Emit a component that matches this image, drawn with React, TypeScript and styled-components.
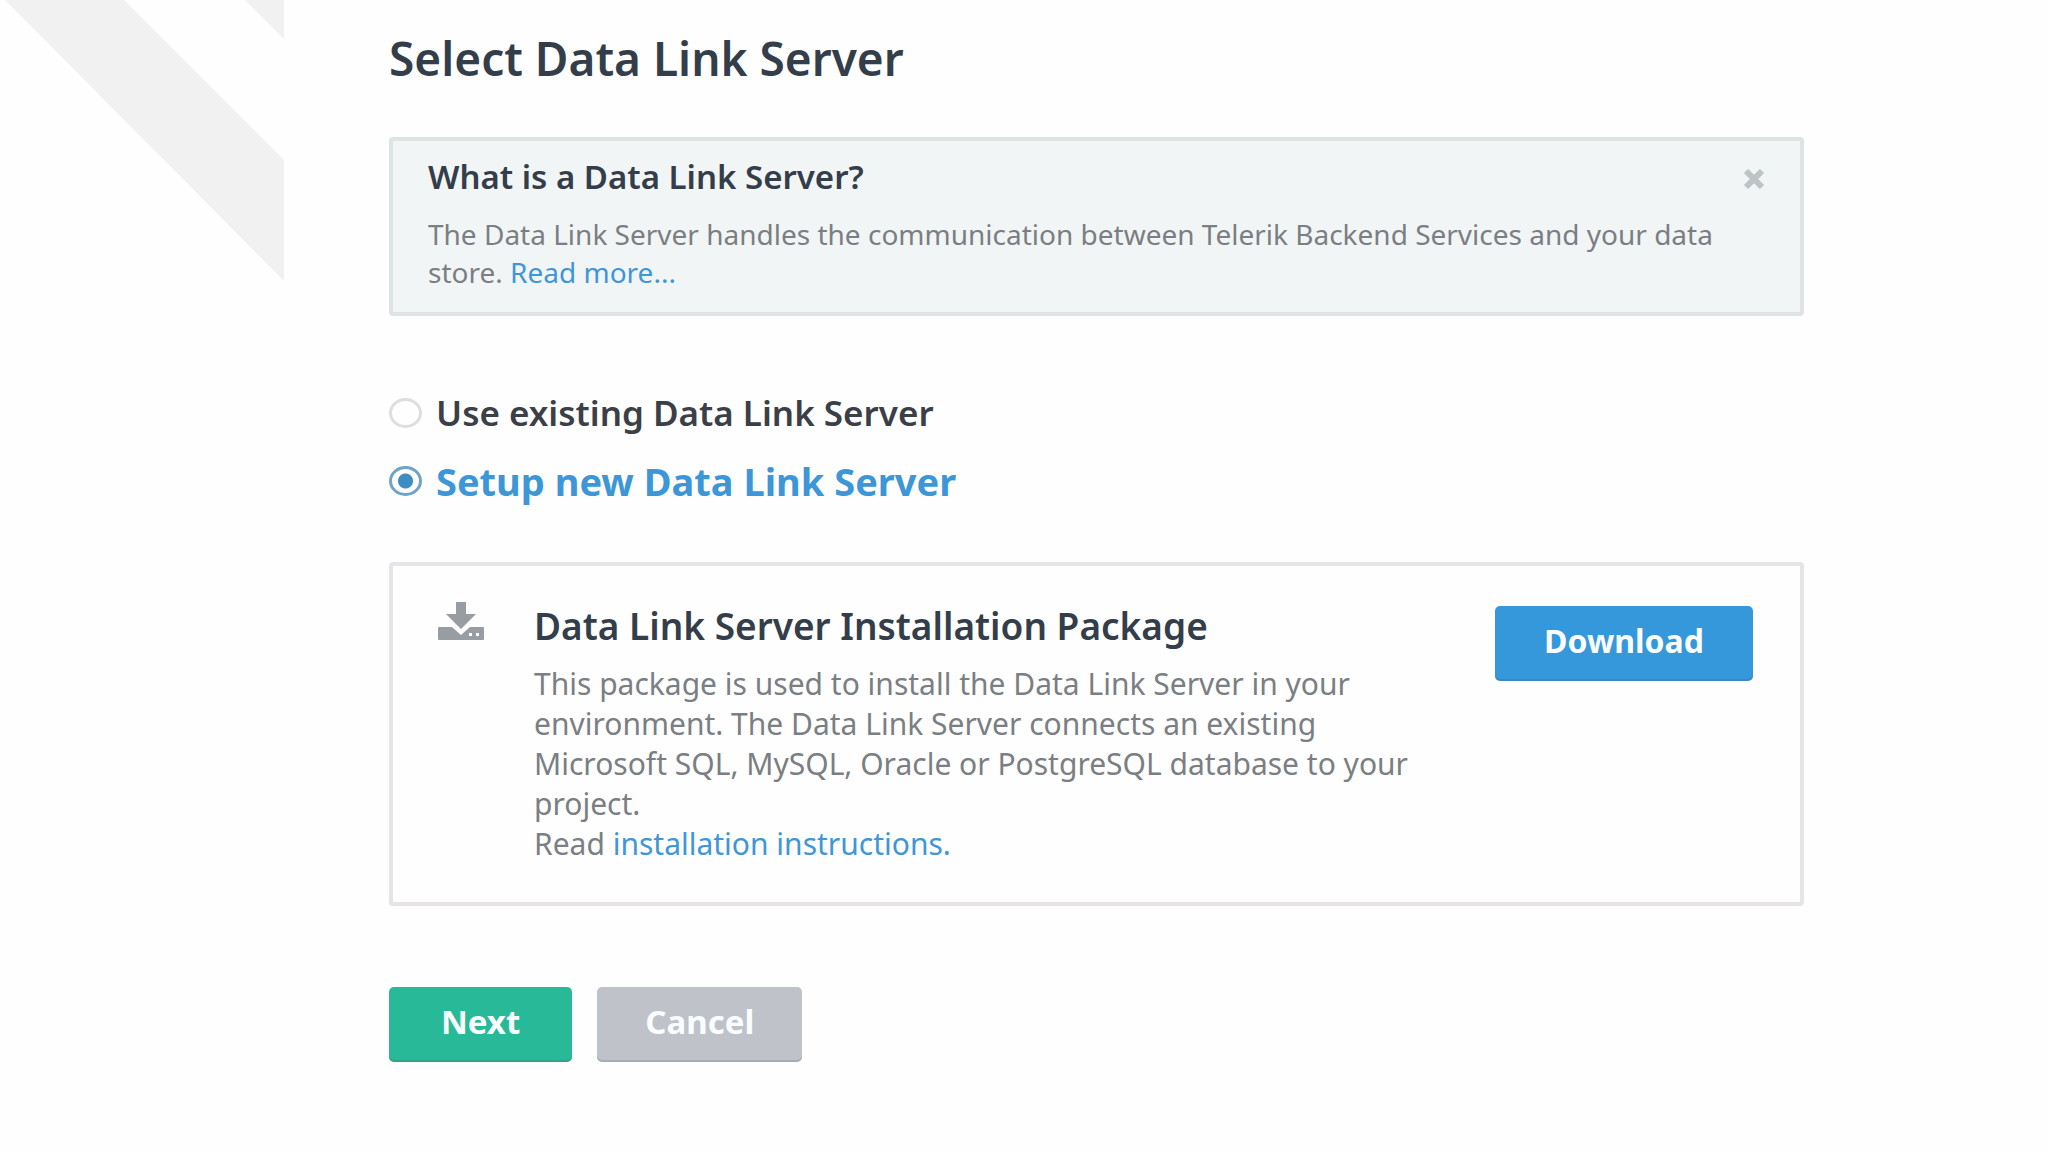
import React, { useState } from "react";
import styled, { createGlobalStyle } from "styled-components";

const GlobalStyle = createGlobalStyle`
  *, *::before, *::after { box-sizing: border-box; }
  body {
    margin: 0;
    background: #fefefe;
    color: #7b7e83;
    font-family: "Noto Sans", "Open Sans", sans-serif;
  }
  h1, h2, p { margin: 0; }
`;

const Page = styled.div`
  display: grid;
  grid-template-columns: 284px minmax(0, 1fr);
`;

const Stripes = styled.svg`
  display: block;
  width: 284px;
  height: 284px;
  fill: #f1f1f1;
`;

const Content = styled.main`
  padding: 26px 244px 88px 105px;
`;

const Title = styled.h1`
  font-size: 46px;
  line-height: 64px;
  font-weight: 600;
  color: #343e4a;
`;

const Panel = styled.section<{ $tinted?: boolean }>`
  border: 4px solid ${(p) => (p.$tinted ? "#e0e3e4" : "#e6e4e8")};
  border-radius: 4px;
  background: ${(p) => (p.$tinted ? "#f2f5f6" : "#fefefe")};
`;

const Info = styled(Panel)`
  display: flex;
  justify-content: space-between;
  align-items: flex-start;
  margin-top: 47px;
  padding: 14px 34px 21px 35px;
`;

const InfoTitle = styled.h2`
  font-size: 33px;
  line-height: 44px;
  font-weight: 600;
  color: #343e4a;
`;

const InfoText = styled.p`
  margin-top: 16px;
  font-size: 28px;
  line-height: 38px;
`;

const Link = styled.a`
  color: #4096d6;
  text-decoration: none;
`;

const CloseButton = styled.button`
  display: flex;
  flex: none;
  margin: 12px 0 0 0;
  padding: 2px 0;
  border: 0;
  background: none;
  cursor: pointer;
  svg { display: block; width: 24px; height: 20px; }
`;

const Choices = styled.fieldset`
  display: flex;
  flex-direction: column;
  gap: 24px;
  margin: 75px 0 0;
  padding: 0;
  border: 0;
`;

const Choice = styled.label<{ $active: boolean }>`
  display: flex;
  align-items: center;
  gap: 14px;
  align-self: flex-start;
  font-size: ${(p) => (p.$active ? 38 : 35)}px;
  line-height: 44px;
  font-weight: ${(p) => (p.$active ? 700 : 600)};
  color: ${(p) => (p.$active ? "#3d97d7" : "#3b3f47")};
  cursor: pointer;
`;

const Radio = styled.input`
  appearance: none;
  width: 33px;
  height: 30px;
  margin: 0;
  border: 3px solid #dedede;
  border-radius: 50%;
  background: #fefefe;
  &:checked {
    border-color: #6fa3c8;
    background: radial-gradient(circle, #3d8cc4 7px, #fefefe 8px);
  }
`;

const Package = styled(Panel)`
  display: flex;
  align-items: flex-start;
  margin-top: 59px;
  padding: 36px 47px 38px 45px;
`;

const TrayIcon = styled.svg`
  flex: none;
  width: 46px;
  height: 38px;
  margin: 0 50px 0 0;
  fill: #989ca3;
`;

const PackageBody = styled.div`
  flex: 1 1 0;
  min-width: 0;
  padding-right: 46px;
`;

const PackageTitle = styled.h2`
  font-size: 37px;
  line-height: 48px;
  font-weight: 600;
  color: #343e4a;
`;

const PackageText = styled.div`
  margin-top: 14px;
  font-size: 30px;
  line-height: 40px;
`;

const Button = styled.button<{ $tone: "blue" | "green" | "gray" }>`
  flex: none;
  height: 75px;
  padding: 0 ${(p) => ({ blue: 49, green: 52, gray: 48 })[p.$tone]}px 6px;
  border: 0;
  border-radius: 5px;
  font: inherit;
  font-size: 33px;
  line-height: 40px;
  font-weight: 700;
  color: #fafdff;
  background: ${(p) => ({ blue: "#3498db", green: "#28ba98", gray: "#c0c2ca" })[p.$tone]};
  box-shadow: inset 0 -2px 0 rgba(70, 80, 100, 0.2);
  cursor: pointer;
`;

const DownloadButton = styled(Button)`
  margin-top: 4px;
  font-size: 32px;
`;

const Actions = styled.footer`
  display: flex;
  gap: 25px;
  margin-top: 81px;
`;

export default function App() {
  const [mode, setMode] = useState("new");
  const [infoOpen, setInfoOpen] = useState(true);

  return (
    <>
      <GlobalStyle />
      <Page>
        <Stripes viewBox="0 0 284 284" aria-hidden="true">
          <path d="M5 0H124L284 160V281Z" />
          <path d="M245 0H284V39Z" />
        </Stripes>
        <Content>
          <Title>Select Data Link Server</Title>
          {infoOpen && (
            <Info $tinted>
              <div>
                <InfoTitle>What is a Data Link Server?</InfoTitle>
                <InfoText>
                  The Data Link Server handles the communication between Telerik Backend Services and your data
                  <br />
                  store. <Link href="#more">Read more...</Link>
                </InfoText>
              </div>
              <CloseButton type="button" aria-label="Close" onClick={() => setInfoOpen(false)}>
                <svg viewBox="0 0 24 20" aria-hidden="true">
                  <path d="M4 2L20 18M20 2L4 18" stroke="#bdc4c6" strokeWidth="6" />
                </svg>
              </CloseButton>
            </Info>
          )}
          <Choices>
            <Choice $active={mode === "existing"}>
              <Radio type="radio" name="server" checked={mode === "existing"} onChange={() => setMode("existing")} />
              Use existing Data Link Server
            </Choice>
            <Choice $active={mode === "new"}>
              <Radio type="radio" name="server" checked={mode === "new"} onChange={() => setMode("new")} />
              Setup new Data Link Server
            </Choice>
          </Choices>
          <Package>
            <TrayIcon viewBox="0 0 46 38" aria-hidden="true">
              <path d="M18 0H28V12H38L23 27L8 12H18Z" />
              <path
                fillRule="evenodd"
                d="M1 25H14L23 33L32 25H45Q46 25 46 26V37Q46 38 45 38H1Q0 38 0 37V26Q0 25 1 25ZM31 31V34H34V31ZM38 31V34H41V31Z"
              />
            </TrayIcon>
            <PackageBody>
              <PackageTitle>Data Link Server Installation Package</PackageTitle>
              <PackageText>
                <p>
                  This package is used to install the Data Link Server in your environment. The Data Link Server
                  connects an existing Microsoft SQL, MySQL, Oracle or PostgreSQL database to your project.
                </p>
                <p>
                  Read <Link href="#instructions">installation instructions.</Link>
                </p>
              </PackageText>
            </PackageBody>
            <DownloadButton type="button" $tone="blue">Download</DownloadButton>
          </Package>
          <Actions>
            <Button type="button" $tone="green">Next</Button>
            <Button type="button" $tone="gray">Cancel</Button>
          </Actions>
        </Content>
      </Page>
    </>
  );
}
